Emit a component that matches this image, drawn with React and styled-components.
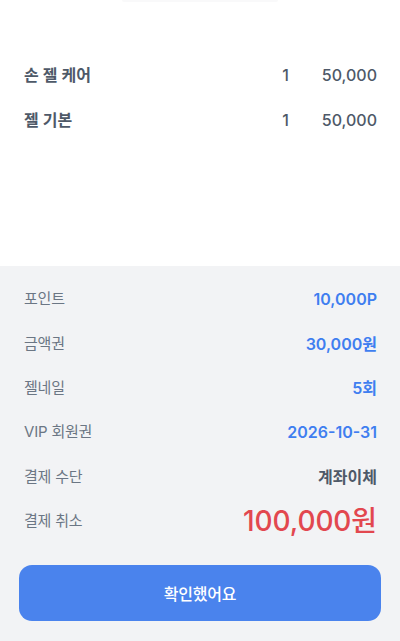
import React from 'react'
import styled, { createGlobalStyle } from 'styled-components'

const GlobalStyle = createGlobalStyle`
 html, body {
  margin: 0;
  padding: 0;
  background: #ffffff;
 }
 body {
  font-family: Inter, 'Noto Sans CJK KR', 'Noto Sans', sans-serif;
  -webkit-font-smoothing: antialiased;
 }
`

const Sheet = styled.div`
 width: 400px;
 height: 641px;
 display: flex;
 flex-direction: column;
 overflow: hidden;
`

const Handle = styled.div`
 width: 156px;
 height: 2px;
 margin: 0 auto;
 background: #f9f9fa;
 border-radius: 0 0 2px 2px;
`

const ItemList = styled.div`
 height: 264px;
 padding: 50px 23px 0 24px;
 box-sizing: border-box;
`

const ItemRow = styled.div`
 display: grid;
 grid-template-columns: 1fr auto 88px;
 align-items: center;
 height: 45px;
 line-height: 20px;
 font-size: 16px;
 font-weight: 600;
 color: #4e5968;
`

const Qty = styled.span`
 text-align: right;
 font-weight: 500;
`

const Price = styled.span`
 text-align: right;
 font-weight: 500;
`

const Summary = styled.div`
 flex: 1;
 background: #f2f3f5;
 padding: 11px 19px 0 19px;
`

const SummaryRow = styled.div`
 display: flex;
 justify-content: space-between;
 align-items: center;
 height: 44.4px;
 line-height: 20px;
 padding: 0 4px 0 5px;
`

const Label = styled.span`
 font-size: 15px;
 color: #6b7684;
 letter-spacing: -0.2px;
`

const Value = styled.span`
 font-size: ${p => (p.$big ? '28px' : '16px')};
 line-height: ${p => (p.$big ? '32px' : '20px')};
 font-weight: ${p => (p.$big ? 500 : 600)};
 color: ${p => p.$color || '#3f7ef0'};
 letter-spacing: ${p => (p.$big ? '-0.1px' : '0')};
`

const ConfirmButton = styled.button`
 display: block;
 width: 100%;
 height: 56px;
 margin-top: 22px;
 border: none;
 border-radius: 13px;
 background: #4a83ed;
 color: #ffffff;
 font-family: inherit;
 font-size: 16px;
 font-weight: 500;
 letter-spacing: -0.2px;
 cursor: pointer;
`

const items = [
 { name: '손 젤 케어', qty: 1, price: '50,000' },
 { name: '젤 기본', qty: 1, price: '50,000' },
]

const summary = [
 { label: '포인트', value: '10,000P' },
 { label: '금액권', value: '30,000원' },
 { label: '젤네일', value: '5회' },
 { label: 'VIP 회원권', value: '2026-10-31' },
 { label: '결제 수단', value: '계좌이체', color: '#4e5968' },
 { label: '결제 취소', value: '100,000원', color: '#e2474f', big: true },
]

export default function App() {
 return (
  <Sheet>
   <GlobalStyle />
   <Handle />
   <ItemList>
    {items.map(item => (
     <ItemRow key={item.name}>
      <span>{item.name}</span>
      <Qty>{item.qty}</Qty>
      <Price>{item.price}</Price>
     </ItemRow>
    ))}
   </ItemList>
   <Summary>
    {summary.map(row => (
     <SummaryRow key={row.label}>
      <Label>{row.label}</Label>
      <Value $color={row.color} $big={row.big}>
       {row.value}
      </Value>
     </SummaryRow>
    ))}
    <ConfirmButton>확인했어요</ConfirmButton>
   </Summary>
  </Sheet>
 )
}
